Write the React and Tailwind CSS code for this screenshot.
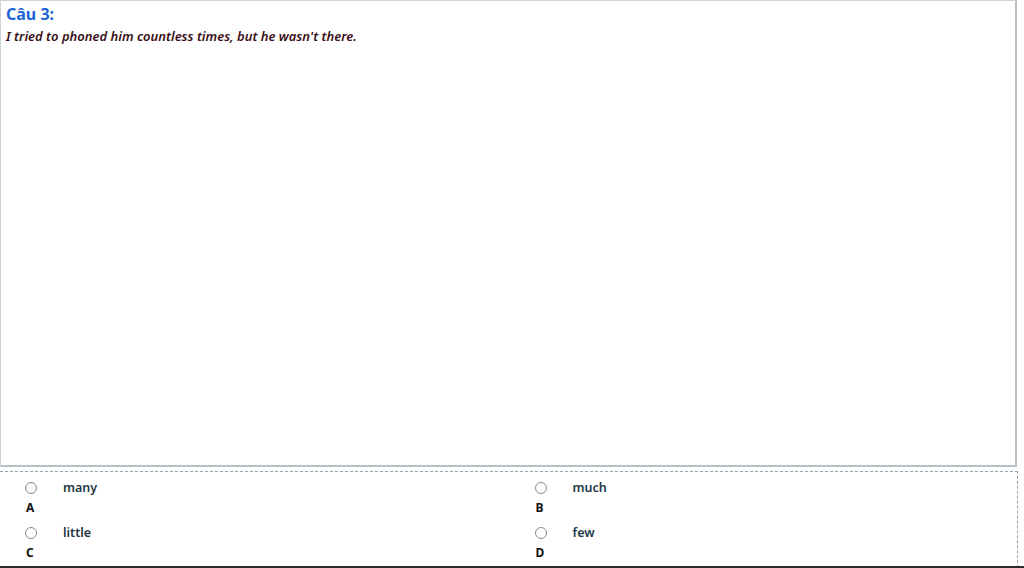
import React from "react";

const font = { fontFamily: '"Segoe UI", "Noto Sans", "Open Sans", sans-serif' };

function Option({ letter, text }) {
  return (
    <div className="flex flex-col">
      <div className="flex items-center h-[20px]">
        <span className="ml-[25px] w-[12px] h-[12px] rounded-full border border-[#8a8a8a] bg-white" />
        <span className="ml-[26px] text-[12.5px] font-semibold text-[#223848] leading-none">{text}</span>
      </div>
      <div className="ml-[26px] h-[20px] flex items-center text-[12px] font-bold text-[#111] leading-none">{letter}</div>
    </div>
  );
}

export default function App() {
  return (
    <div className="w-[1024px] h-[568px] bg-white overflow-hidden flex flex-col relative" style={font}>
      <div className="w-[1017px] h-[467px] border border-[#cfd3d7] border-r-2 border-b-2 border-r-[#b9c0c6] border-b-[#b9c0c6] px-[5px] pt-[3px] shrink-0">
        <div className="text-[16px] font-bold text-[#1a63d6] leading-[20px]">Câu 3:</div>
        <div className="mt-[3px] text-[13px] font-semibold italic text-[#3a0f16] leading-[18px]">
          I tried to phoned him countless times, but he wasn't there.
        </div>
      </div>
      <div className="mt-[4px] w-[1018px] grow border-t border-r border-dashed border-[#8fa8a8] pt-[6px]">
        <div className="grid grid-cols-2 gap-y-[5px]">
          <Option letter="A" text="many" />
          <div className="ml-[1px]"><Option letter="B" text="much" /></div>
          <Option letter="C" text="little" />
          <div className="ml-[1px]"><Option letter="D" text="few" /></div>
        </div>
      </div>
      <div className="absolute left-0 bottom-0 w-full h-[2px] bg-[#2a2a2a]" />
    </div>
  );
}
